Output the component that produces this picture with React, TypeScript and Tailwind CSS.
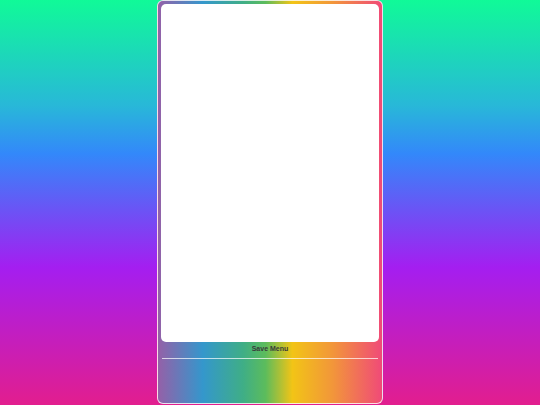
export default function App() {
  return (
    <div className="w-[540px] h-[405px] overflow-hidden bg-[linear-gradient(to_bottom,#10fa98_0%,#28b8d8_26%,#3388fa_38%,#a41ef0_66%,#e21e8e_100%)] flex justify-center">
      <div className="w-[226px] h-[404px] rounded-[6px] border border-white/80 bg-[linear-gradient(to_right,#9560a8_0%,#3497cc_20%,#3fae86_38%,#5cbc5c_48%,#f2c416_60%,#f2963a_78%,#f04a78_100%)] p-[3px] flex flex-col font-['Liberation_Sans',Arial,sans-serif]">
        <div className="h-[338px] rounded-[5px] bg-white shrink-0" />
        <div className="text-center text-[7px] font-bold text-[#3a3a3a] leading-none mt-[3px]">Save Menu</div>
        <div className="mt-[6px] mx-[1px] h-[1px] bg-white/70" />
      </div>
    </div>
  );
}
